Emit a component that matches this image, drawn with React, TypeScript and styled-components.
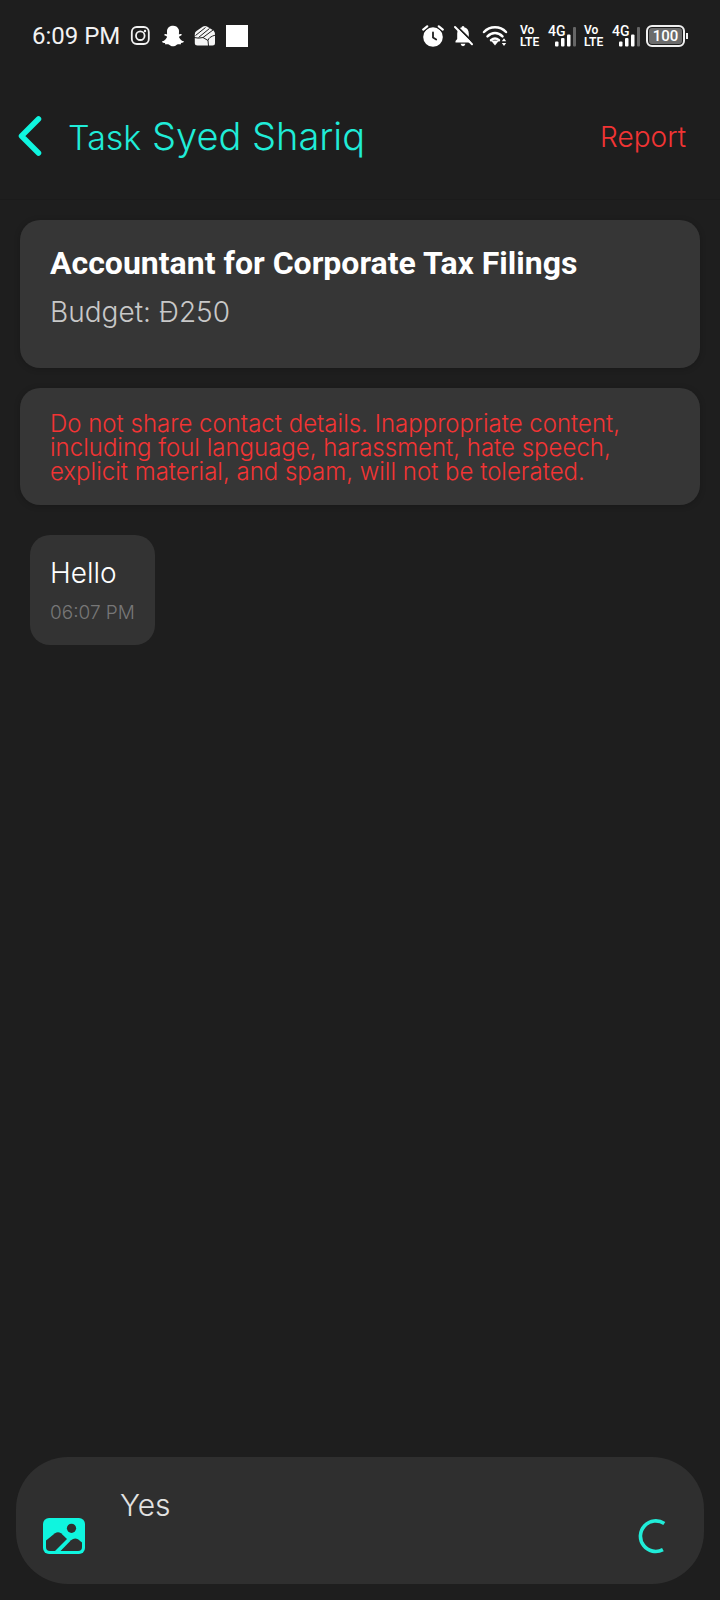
import React, { useState } from "react";
import styled, { createGlobalStyle } from "styled-components";
import { FaSnapchatGhost } from "react-icons/fa";

const color = {
  page: "#1e1e1e",
  card: "#363636",
  bubble: "#333333",
  composer: "#2f2f2f",
  accent: "#0ff5df",
  title: "#20ecd8",
  danger: "#f23434",
};

const GlobalStyle = createGlobalStyle`
  * { box-sizing: border-box; }
  body {
    margin: 0;
    background: ${color.page};
    color: #ffffff;
    font-family: Inter, "Open Sans", sans-serif;
    font-weight: 300;
  }
`;

const Screen = styled.div`
  display: flex;
  flex-direction: column;
  min-height: 100vh;
`;

const StatusBar = styled.div`
  display: flex;
  align-items: center;
  justify-content: space-between;
  height: 72px;
  padding: 0 32px;
  font-family: Roboto, sans-serif;
  font-weight: 400;
`;

const StatusGroup = styled.div<{ $gap: number }>`
  display: flex;
  align-items: center;
  gap: ${(p) => p.$gap}px;

  svg {
    display: block;
    flex: none;
  }
`;

const MobileGroup = styled(StatusGroup)`
  padding-left: 6px;
`;

const Clock = styled.time`
  font-size: 24px;
  line-height: 28px;
  color: #f2f2f2;
`;

const WhiteSquare = styled.span`
  width: 22px;
  height: 22px;
  background: #ffffff;
`;

const VolteLabel = styled.span`
  display: flex;
  flex-direction: column;
  width: 20px;
  font-size: 12px;
  font-weight: 600;
  line-height: 12px;
`;

const SignalBox = styled.span`
  position: relative;
  width: 28px;
  height: 22px;
`;

const SignalLabel = styled.span`
  position: absolute;
  top: 0;
  left: 0;
  font-size: 14px;
  font-weight: 500;
  line-height: 12px;
`;

const Battery = styled.span`
  display: flex;
  align-items: center;
`;

const BatteryBody = styled.span`
  width: 39px;
  height: 22px;
  border: 2px solid #f0f0f0;
  border-radius: 6px;
  background: #6b6b6b;
  box-shadow: inset 0 0 0 1px ${color.page};
  font-size: 15px;
  font-weight: 500;
  line-height: 18px;
  text-align: center;
`;

const BatteryTip = styled.span`
  width: 2px;
  height: 6px;
  margin-left: 1px;
  background: #f0f0f0;
`;

const Header = styled.header`
  display: flex;
  align-items: center;
  height: 128px;
  padding: 0 34px 0 16px;
  border-bottom: 1px solid #1b1b1b;
`;

const PlainButton = styled.button`
  flex: none;
  padding: 0;
  border: 0;
  background: none;
  color: ${color.accent};
  font: inherit;
  cursor: pointer;

  svg {
    display: block;
  }
`;

const ReportButton = styled(PlainButton)`
  padding-top: 2px;
  color: ${color.danger};
  font-size: 28px;
  line-height: 32px;
`;

const Title = styled.h1`
  flex: 1;
  margin: 0 0 0 24px;
  padding-top: 2px;
  color: ${color.title};
  font-size: 38px;
  font-weight: 300;
  line-height: 48px;
`;

const TitlePrefix = styled.span`
  font-size: 34px;
`;

const Content = styled.main`
  display: flex;
  flex: 1;
  flex-direction: column;
  gap: 20px;
  padding: 20px;
`;

const Card = styled.section`
  padding: 24px 30px 21px;
  border-radius: 20px;
  background: ${color.card};
  box-shadow: 0 1px 6px rgba(0, 0, 0, 0.2);
`;

const JobCard = styled(Card)`
  padding-bottom: 38px;
`;

const JobTitle = styled.h2`
  margin: 0 0 12px;
  font-family: Roboto, sans-serif;
  font-size: 32px;
  font-weight: 700;
  line-height: 38px;
`;

const Budget = styled.p`
  margin: 0;
  color: #c8c8c8;
  font-size: 28px;
  line-height: 36px;
`;

const Warning = styled.p`
  margin: 0;
  color: ${color.danger};
  font-size: 24px;
  line-height: 24px;
`;

const Message = styled.article`
  align-self: flex-start;
  margin: 10px;
  padding: 20px;
  border-radius: 20px;
  background: ${color.bubble};
`;

const MessageText = styled.p`
  margin: 0 0 10px;
  font-size: 28px;
  line-height: 36px;
`;

const MessageTime = styled.time`
  display: block;
  color: #777777;
  font-size: 19px;
  line-height: 24px;
`;

const Composer = styled.form`
  display: flex;
  align-items: flex-end;
  margin: 0 16px 16px;
  padding: 28px 32px 29px 26px;
  border-radius: 52px;
  background: ${color.composer};
`;

const MessageInput = styled.textarea`
  flex: 1;
  min-width: 0;
  height: 70px;
  margin: 0 24px 0 34px;
  padding: 0;
  border: 0;
  outline: 0;
  resize: none;
  background: none;
  color: #e2e2e2;
  font: inherit;
  font-size: 30px;
  line-height: 40px;
`;

const InstagramIcon = () => (
  <svg width="22" height="22" viewBox="0 0 22 22" fill="none" stroke="#f2f2f2" strokeWidth="1.8" aria-hidden="true">
    <rect x="1.8" y="2" width="17" height="17" rx="5" />
    <circle cx="10.3" cy="10.7" r="4.3" />
    <circle cx="15" cy="6" r="0.6" strokeWidth="1.2" />
  </svg>
);

const FistIcon = () => (
  <svg width="22" height="22" viewBox="0 0 22 22" aria-hidden="true">
    <path
      d="M.8 9 Q.8 7 2.5 6 L9 1.5 Q11 .3 13 1.5 L19.5 5.5 Q21 7 21 9 V18 Q21 20.5 18.5 20.5 H3.5 Q.8 20.5 .8 18 Z"
      fill="#f5f5f5"
    />
    <path
      d="M1.5 10.5 L11.5 2.5 M4.5 12.5 L15.5 3.5 M9 12.5 L19 5 M0 12.5 Q4.5 13.8 9 12.5 L14 15.5 L14.5 21 M14 15.5 Q14.5 12 21.5 10"
      fill="none"
      stroke={color.page}
      strokeWidth="1"
    />
  </svg>
);

const AlarmIcon = () => (
  <svg width="22" height="22" viewBox="0 0 22 22" fill="none" strokeLinecap="round" aria-hidden="true">
    <circle cx="11" cy="12" r="9.8" fill="#fff" />
    <path d="M1.2 5 L5.2 1.5 M20.8 5 L16.8 1.5" stroke={color.page} strokeWidth="4.2" />
    <path d="M1.2 4.6 L5.2 1.3 M20.8 4.6 L16.8 1.3" stroke="#fff" strokeWidth="2.2" />
    <path d="M11 7.5 V12.5 L14.2 14.5" stroke={color.page} strokeWidth="1.8" />
  </svg>
);

const BellOffIcon = () => (
  <svg width="22" height="22" viewBox="0 0 22 22" fill="none" aria-hidden="true">
    <path
      d="M3.5 17.5 V16 L5.2 14 V8.5 C5.2 5 7 2.8 9.8 2.2 V1.6 Q11 .4 12.2 1.6 V2.2 C15 2.8 16.8 5 16.8 8.5 V14 L18.5 16 V17.5 Z"
      fill="#fff"
    />
    <path d="M8.6 18.8 H13.4 Q13 21.2 11 21.2 Q9 21.2 8.6 18.8 Z" fill="#fff" />
    <path d="M4.5 1 L21.5 17.8" stroke={color.page} strokeWidth="2" />
    <path d="M3 2 L20 19.2" stroke="#fff" strokeWidth="2" strokeLinecap="round" />
  </svg>
);

const WifiIcon = () => (
  <svg width="26" height="22" viewBox="0 0 26 22" fill="none" stroke="#fff" strokeWidth="2.5" strokeLinecap="round" aria-hidden="true">
    <path d="M2 7 C8 .8 18 .8 24 7 M5.5 11.3 C10 6.8 16 6.8 20.5 11.3" />
    <path d="M9 15.2 C11.5 13 14.5 13 17 15.2" />
    <path d="M9 15.5 H17 L13 20.5 Z" fill="#fff" stroke="none" />
    <path d="M19.8 16.2 L22 13.2 L24.2 16.2 Z M19.8 18 L22 21 L24.2 18 Z" fill="#fff" stroke="none" />
  </svg>
);

const Volte = () => (
  <VolteLabel>
    <span>Vo</span>
    <span>LTE</span>
  </VolteLabel>
);

const Signal = () => (
  <SignalBox>
    <svg width="28" height="22" viewBox="0 0 28 22" aria-hidden="true">
      <rect x="7" y="16.5" width="3.5" height="5" rx="1" fill="#fff" />
      <rect x="13" y="13" width="3.5" height="8.5" rx="1" fill="#fff" />
      <rect x="19" y="9.5" width="3.5" height="12" rx="1" fill="#fff" />
      <rect x="25" y="2" width="3" height="19.5" rx="1" fill="#666" />
    </svg>
    <SignalLabel>4G</SignalLabel>
  </SignalBox>
);

const BackIcon = () => (
  <svg width="28" height="44" viewBox="0 0 28 44" fill="none" aria-hidden="true">
    <path d="M22.5 5 L5.5 22 L22.5 39" stroke={color.accent} strokeWidth="5.5" strokeLinecap="round" strokeLinejoin="round" />
  </svg>
);

const PictureIcon = () => (
  <svg width="44" height="38" viewBox="0 0 44 38" aria-hidden="true">
    <rect x="1" y="1" width="42" height="36" rx="6" fill={color.accent} />
    <circle cx="29.5" cy="11.3" r="4.6" fill={color.composer} />
    <path d="M4 23.5 L13 16.3 Q16 14.3 19 16.3 L25 22 L13 34 H8 Q4 34 4 30 Z" fill={color.composer} />
    <path d="M18.5 34 L29 23.2 Q32.5 20.2 36 22.3 L40 25.5 V30 Q40 34 36 34 Z" fill={color.composer} />
  </svg>
);

const SpinnerIcon = () => (
  <svg width="36" height="36" viewBox="0 0 36 36" fill="none" aria-hidden="true">
    <path d="M28.3 4.5 A15.3 15.3 0 1 0 26.9 30.7" stroke={color.title} strokeWidth="3.6" />
  </svg>
);

export default function App() {
  const [draft, setDraft] = useState("Yes");

  return (
    <Screen>
      <GlobalStyle />
      <StatusBar>
        <StatusGroup $gap={10}>
          <Clock>6:09 PM</Clock>
          <InstagramIcon />
          <FaSnapchatGhost size={22} color="#fff" />
          <FistIcon />
          <WhiteSquare />
        </StatusGroup>
        <StatusGroup $gap={6}>
          <StatusGroup $gap={8}>
            <AlarmIcon />
            <BellOffIcon />
            <WifiIcon />
          </StatusGroup>
          <MobileGroup $gap={8}>
            <Volte />
            <Signal />
            <Volte />
            <Signal />
          </MobileGroup>
          <Battery>
            <BatteryBody>100</BatteryBody>
            <BatteryTip />
          </Battery>
        </StatusGroup>
      </StatusBar>

      <Header>
        <PlainButton type="button" aria-label="Back">
          <BackIcon />
        </PlainButton>
        <Title>
          <TitlePrefix>Task</TitlePrefix> Syed Shariq
        </Title>
        <ReportButton type="button">Report</ReportButton>
      </Header>

      <Content>
        <JobCard>
          <JobTitle>Accountant for Corporate Tax Filings</JobTitle>
          <Budget>Budget: Đ250</Budget>
        </JobCard>
        <Card>
          <Warning>
            Do not share contact details. Inappropriate content, including foul language, harassment, hate speech,
            explicit material, and spam, will not be tolerated.
          </Warning>
        </Card>
        <Message>
          <MessageText>Hello</MessageText>
          <MessageTime>06:07 PM</MessageTime>
        </Message>
      </Content>

      <Composer onSubmit={(event) => event.preventDefault()}>
        <PlainButton type="button" aria-label="Attach a picture">
          <PictureIcon />
        </PlainButton>
        <MessageInput aria-label="Message" value={draft} onChange={(event) => setDraft(event.target.value)} />
        <PlainButton type="submit" aria-label="Sending">
          <SpinnerIcon />
        </PlainButton>
      </Composer>
    </Screen>
  );
}
